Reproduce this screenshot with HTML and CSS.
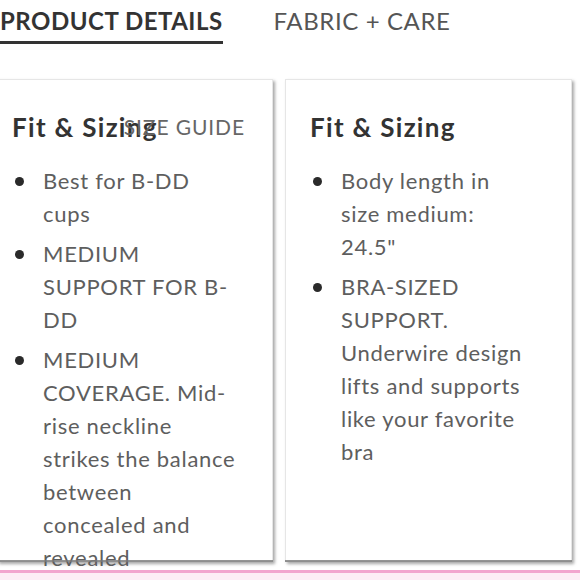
FILE: index.html
```html
<!DOCTYPE html>
<html>
<head>
<meta charset="utf-8">
<link rel="stylesheet" href="styles.css">
</head>
<body>
<div class="page">
  <nav class="tabs">
    <div class="tab active">PRODUCT DETAILS</div>
    <div class="tab">FABRIC + CARE</div>
  </nav>
  <div class="cards">
    <section class="card card-left">
      <div class="card-head">
        <h2>Fit &amp; Sizing</h2>
        <span class="size-guide">SIZE GUIDE</span>
      </div>
      <ul>
        <li>Best for B-DD<br>cups</li>
        <li>MEDIUM<br>SUPPORT FOR B-<br>DD</li>
        <li>MEDIUM<br>COVERAGE. Mid-<br>rise neckline<br>strikes the balance<br>between<br>concealed and<br>revealed</li>
      </ul>
    </section>
    <section class="card card-right">
      <div class="card-head">
        <h2>Fit &amp; Sizing</h2>
      </div>
      <ul>
        <li>Body length in<br>size medium:<br>24.5"</li>
        <li>BRA-SIZED<br>SUPPORT.<br>Underwire design<br>lifts and supports<br>like your favorite<br>bra</li>
      </ul>
    </section>
  </div>
  <div class="footer"></div>
</div>
</body>
</html>
```

FILE: styles.css
```css
* { box-sizing: border-box; }
html, body { margin: 0; padding: 0; background: #fff; }
body {
  font-family: Lato, "Noto Sans", sans-serif;
  color: #5e5e5e;
  width: 580px;
  height: 580px;
  overflow: hidden;
}
.page { display: flex; flex-direction: column; }
.tabs {
  display: flex;
  gap: 51px;
  height: 44px;
  align-items: flex-start;
}
.tab {
  font-size: 24px;
  line-height: 28px;
  padding-top: 7px;
  color: #555;
  letter-spacing: 0.6px;
  white-space: nowrap;
}
.tab.active {
  font-weight: 700;
  color: #333;
  border-bottom: 3px solid #333;
  padding-bottom: 6px;
  letter-spacing: 0.5px;
}
.cards {
  display: grid;
  grid-template-columns: 276px 287px;
  column-gap: 12px;
  margin-top: 35px;
  margin-left: -3px;
  height: 483px;
}
.card {
  position: relative;
  background: #fff;
  border: 1px solid #e6e6e6;
  box-shadow: 2px 2px 3px rgba(0,0,0,0.35);
  padding: 30px 0 0 14px;
  height: 483px;
}
.card::after {
  content: "";
  position: absolute;
  left: -1px; right: -1px; bottom: -1px;
  height: 2px;
  background: rgba(120,120,120,0.8);
}
.card-right { padding-left: 24px; }
.card-head {
  display: flex;
  align-items: center;
  height: 34px;
  white-space: nowrap;
}
.card-head h2 {
  margin: 0;
  font-size: 26px;
  font-weight: 700;
  color: #333;
  letter-spacing: 1.3px;
}
.size-guide {
  margin-left: -34px;
  font-size: 21px;
  letter-spacing: 0.9px;
  color: #666;
  position: relative;
  top: -1px;
}
ul {
  margin: 20px 0 0 0;
  padding: 0 0 0 31px;
  list-style: none;
  white-space: nowrap;
}
li {
  position: relative;
  font-size: 22px;
  line-height: 33px;
  letter-spacing: 0.7px;
  margin-bottom: 7px;
}
li::before {
  content: "";
  position: absolute;
  left: -28px;
  top: 13px;
  width: 9px;
  height: 9px;
  border-radius: 50%;
  background: #2a2a2a;
}
.footer {
  margin-top: 8px;
  height: 10px;
  border-top: 3px solid #f2a6cf;
  background: #fdeef6;
}
```
